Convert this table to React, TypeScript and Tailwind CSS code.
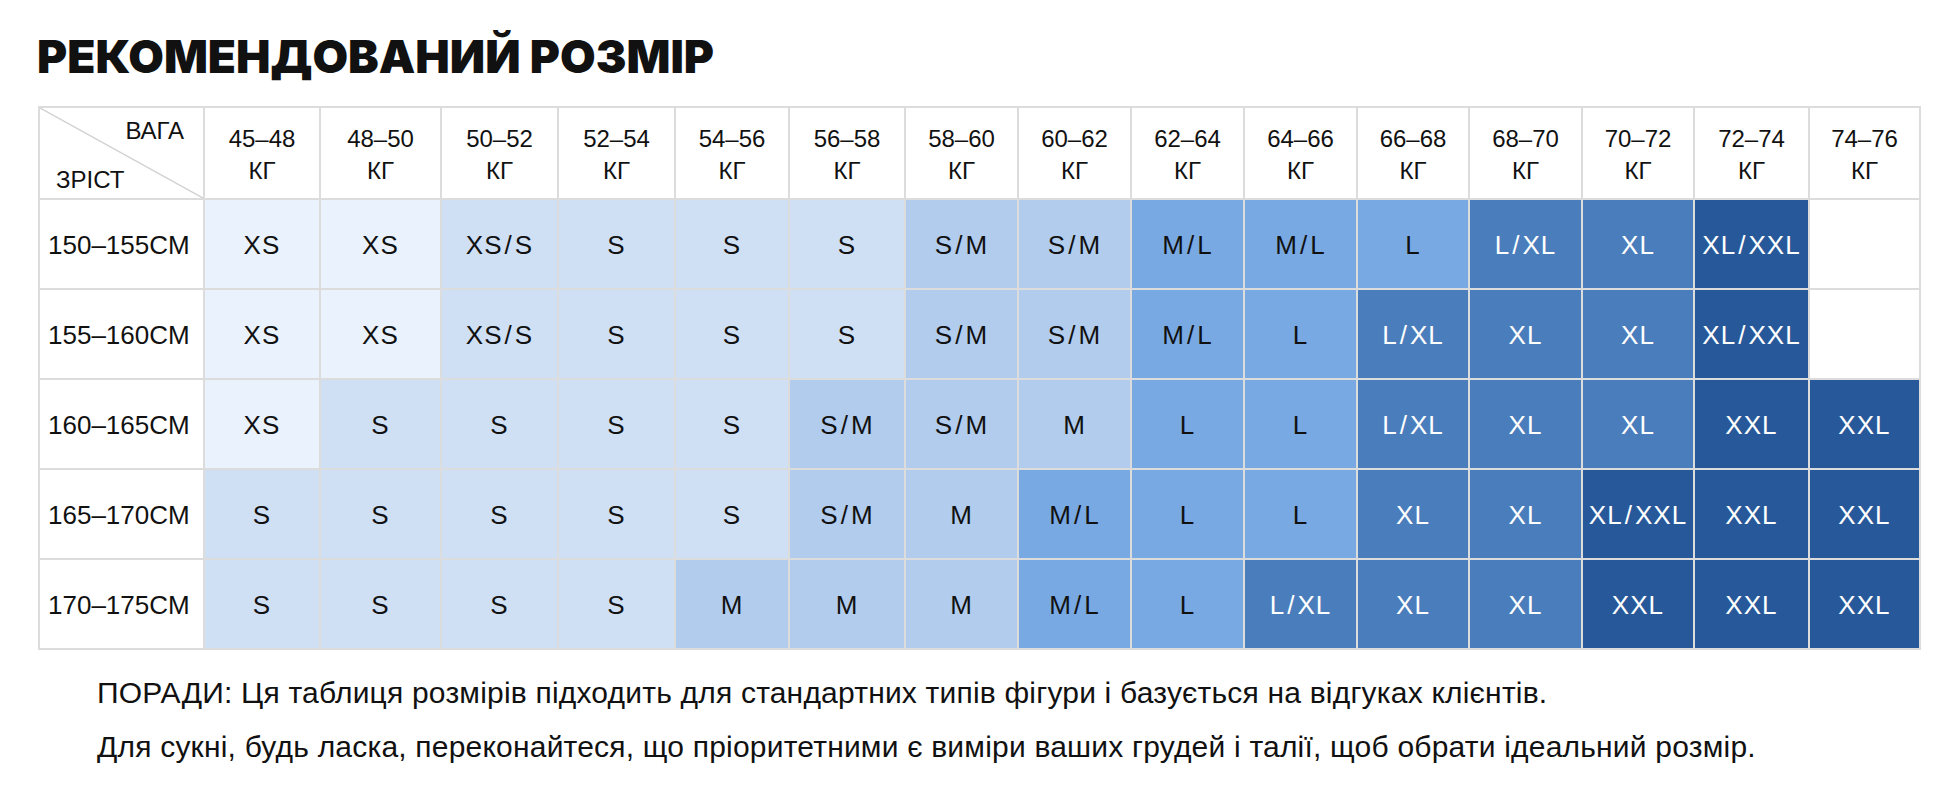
import React from "react";

const weights = [
  "45–48", "48–50", "50–52", "52–54", "54–56", "56–58", "58–60", "60–62",
  "62–64", "64–66", "66–68", "68–70", "70–72", "72–74", "74–76",
];

const rows: { h: string; s: string[] }[] = [
  { h: "150–155CM", s: ["XS", "XS", "XS/S", "S", "S", "S", "S/M", "S/M", "M/L", "M/L", "L", "L/XL", "XL", "XL/XXL", ""] },
  { h: "155–160CM", s: ["XS", "XS", "XS/S", "S", "S", "S", "S/M", "S/M", "M/L", "L", "L/XL", "XL", "XL", "XL/XXL", ""] },
  { h: "160–165CM", s: ["XS", "S", "S", "S", "S", "S/M", "S/M", "M", "L", "L", "L/XL", "XL", "XL", "XXL", "XXL"] },
  { h: "165–170CM", s: ["S", "S", "S", "S", "S", "S/M", "M", "M/L", "L", "L", "XL", "XL", "XL/XXL", "XXL", "XXL"] },
  { h: "170–175CM", s: ["S", "S", "S", "S", "M", "M", "M", "M/L", "L", "L/XL", "XL", "XL", "XXL", "XXL", "XXL"] },
];

const tone: Record<string, string> = {
  "": "bg-white",
  XS: "bg-[#eaf3fd] text-[#111111]",
  "XS/S": "bg-[#cfe0f5] text-[#111111]",
  S: "bg-[#cfe0f5] text-[#111111]",
  "S/M": "bg-[#b1cced] text-[#111111]",
  M: "bg-[#b1cced] text-[#111111]",
  "M/L": "bg-[#79a9e3] text-[#111111]",
  L: "bg-[#79a9e3] text-[#111111]",
  "L/XL": "bg-[#4a7dbc] text-white",
  XL: "bg-[#4a7dbc] text-white",
  "XL/XXL": "bg-[#27599a] text-white",
  XXL: "bg-[#27599a] text-white",
};

const sans = { fontFamily: '"Liberation Sans", Arial, sans-serif' };

function SizeLabel({ s }: { s: string }) {
  const parts = s.split("/");
  return (
    <span className="flex items-center">
      {parts.map((p, i) => (
        <React.Fragment key={i}>
          {i > 0 && <span className="mx-[2px]">/</span>}
          <span>{p}</span>
        </React.Fragment>
      ))}
    </span>
  );
}

export default function App() {
  return (
    <div className="w-[1958px] h-[803px] bg-white px-[38px] pt-[33px]" style={sans}>
      <h1
        className="text-[46px] leading-none font-black text-[#111111] -ml-px"
        style={{ fontFamily: 'Inter, "DejaVu Sans", sans-serif' }}
      >
        РЕКОМЕНДОВАНИЙ РОЗМІР
      </h1>

      <div className="mt-[27px] w-[1883px] border-2 border-[#dcdcdc] bg-[#dcdcdc] grid gap-[2px] grid-cols-[163px_114px_119px_115px_115px_112px_114px_111px_111px_111px_111px_110px_111px_110px_113px_109px] grid-rows-[90px_repeat(5,88px)]">
        <div className="relative bg-white">
          <svg className="absolute inset-0 h-full w-full" viewBox="0 0 163 90" preserveAspectRatio="none">
            <line x1="0" y1="0" x2="163" y2="90" stroke="#d2d2d2" strokeWidth="1.5" />
          </svg>
          <div className="absolute right-[19px] top-[11px] text-[24px] leading-none text-[#111111]">ВАГА</div>
          <div className="absolute left-[16px] bottom-[6px] text-[24px] leading-none text-[#111111]">ЗРІСТ</div>
        </div>
        {weights.map((w) => (
          <div key={w} className="bg-white flex flex-col items-center justify-center text-[24px] leading-[32px] text-[#111111] pt-[4px]">
            <span>{w}</span>
            <span>КГ</span>
          </div>
        ))}
        {rows.map((r) => (
          <React.Fragment key={r.h}>
            <div className="bg-white flex items-center pl-[8px] pt-[3px] text-[26px] text-[#111111]">{r.h}</div>
            {r.s.map((s, i) => (
              <div key={i} className={`flex items-center justify-center pt-[3px] text-[26px] tracking-[0.04em] ${tone[s]}`}>
                {s && <SizeLabel s={s} />}
              </div>
            ))}
          </React.Fragment>
        ))}
      </div>

      <div className="mt-[16px] ml-[59px] text-[30px] leading-[54px] tracking-[0.2px] text-[#111111]">
        <p>ПОРАДИ: Ця таблиця розмірів підходить для стандартних типів фігури і базується на відгуках клієнтів.</p>
        <p>Для сукні, будь ласка, переконайтеся, що пріоритетними є виміри ваших грудей і талії, щоб обрати ідеальний розмір.</p>
      </div>
    </div>
  );
}
